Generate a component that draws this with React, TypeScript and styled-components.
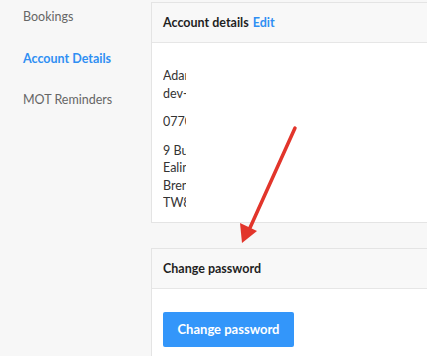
import styled, { createGlobalStyle } from "styled-components";

const GlobalStyle = createGlobalStyle`
  html, body {
    margin: 0;
    padding: 0;
    background: #f7f7f7;
    font-family: Lato, "Liberation Sans", sans-serif;
  }
`;

const Page = styled.div`
  position: relative;
  display: flex;
  width: 427px;
  height: 356px;
  overflow: hidden;
`;

const Sidebar = styled.nav`
  width: 151px;
  flex-shrink: 0;
  display: flex;
  flex-direction: column;
  padding-left: 23px;
  box-sizing: border-box;
`;

const NavItem = styled.a<{ $active?: boolean }>`
  display: block;
  padding: 7px 0 14.5px;
  line-height: 20px;
  font-size: 12.5px;
  font-weight: ${({ $active }) => ($active ? 700 : 400)};
  color: ${({ $active }) => ($active ? "#2f8ff3" : "#666")};
  text-decoration: none;
`;

const Main = styled.main`
  flex: 1;
  padding-top: 2px;
  min-width: 0;
`;

const Card = styled.section`
  width: 330px;
  background: #fff;
  border: 1px solid #e4e4e4;
  margin-bottom: 25px;
`;

const CardHeader = styled.header`
  height: 39px;
  display: flex;
  align-items: center;
  gap: 4px;
  padding: 0 11px;
  background: #f8f8f8;
  border-bottom: 1px solid #e6e6e6;
  font-size: 12.5px;
  font-weight: 700;
  color: #1f1f1f;
`;

const EditLink = styled.a`
  color: #2f8ff3;
  text-decoration: none;
`;

const CardBody = styled.div<{ $top: number; $bottom: number }>`
  padding: ${({ $top, $bottom }) => `${$top}px 11px ${$bottom}px`};
`;

/* the address block is blanked out after the first few letters in the shot */
const Redacted = styled.div`
  width: 23px;
  overflow: hidden;
  white-space: nowrap;
  font-size: 12.5px;
  line-height: 17.5px;
  color: #333;
`;

const Para = styled.p`
  margin: 0 0 11px;
  &:last-child {
    margin-bottom: 0;
  }
`;

const Button = styled.button`
  height: 35px;
  width: 131px;
  border: none;
  border-radius: 2px;
  background: #3396fa;
  color: #fff;
  font-family: inherit;
  font-size: 13px;
  font-weight: 700;
  cursor: pointer;
`;

const ArrowOverlay = styled.svg`
  position: absolute;
  left: 0;
  top: 0;
  pointer-events: none;
`;

export default function App() {
  return (
    <>
      <GlobalStyle />
      <Page>
        <Sidebar>
          <NavItem>Bookings</NavItem>
          <NavItem $active>Account Details</NavItem>
          <NavItem>MOT Reminders</NavItem>
        </Sidebar>
        <Main>
          <Card>
            <CardHeader>
              Account details <EditLink>Edit</EditLink>
            </CardHeader>
            <CardBody $top={24} $bottom={10}>
              <Redacted>
                <Para>
                  Adam Smith
                  <br />
                  dev-account@example.com
                </Para>
                <Para>07700 900123</Para>
                <Para>
                  9 Bull Lane
                  <br />
                  Ealing
                  <br />
                  Brentford
                  <br />
                  TW8 0AA
                </Para>
              </Redacted>
            </CardBody>
          </Card>
          <Card>
            <CardHeader>Change password</CardHeader>
            <CardBody $top={23} $bottom={20}>
              <Button>Change password</Button>
            </CardBody>
          </Card>
        </Main>
        <ArrowOverlay width="427" height="356" viewBox="0 0 427 356">
          <line
            x1="295"
            y1="128"
            x2="249"
            y2="230"
            stroke="#e2352b"
            strokeWidth="3.5"
            strokeLinecap="round"
          />
          <polygon points="240,223 257,231 242,243" fill="#e2352b" />
        </ArrowOverlay>
      </Page>
    </>
  );
}
